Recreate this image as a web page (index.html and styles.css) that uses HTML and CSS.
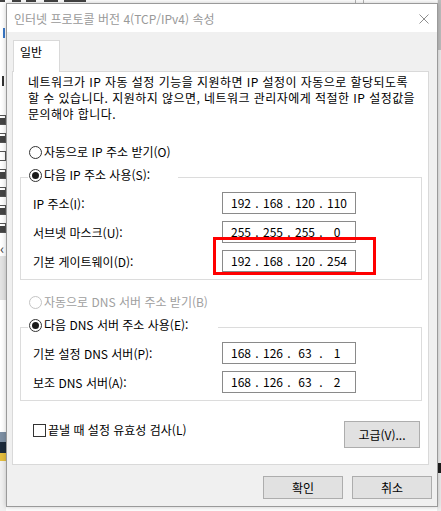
FILE: index.html
```html
<!DOCTYPE html>
<html lang="ko">
<head>
<meta charset="utf-8">
<title>인터넷 프로토콜 버전 4(TCP/IPv4) 속성</title>
<link rel="stylesheet" href="styles.css">
</head>
<body>
<div class="desktop">
  <div class="backwin">
    <span class="bw-tick k1"></span>
    <span class="bw-tick k2"></span>
    <span class="bw-tick k3"></span>
    <span class="bw-tick k4"></span>
    <span class="bw-tick k5"></span>
    <span class="bw-vline v1"></span>
    <span class="bw-vline v2"></span>
    <span class="bw-blue"></span>
    <span class="bw-mark"></span>
    <div class="bw-checks">
      <span class="bw-cb on"></span>
      <span class="bw-cb on"></span>
      <span class="bw-cb"></span>
      <span class="bw-cb on"></span>
      <span class="bw-cb on"></span>
      <span class="bw-cb on"></span>
      <span class="bw-cb on"></span>
    </div>
    <span class="bw-chev">&lsaquo;</span>
    <span class="bw-band"></span>
    <span class="bw-task t1"></span>
    <span class="bw-task t2"></span>
    <span class="bw-task t3"></span>
    <span class="bw-lower"></span>
    <span class="bw-right"></span>
    <span class="bw-thumb"></span>
    <span class="bw-rdark"></span>
  </div>

  <div class="dialog">
    <div class="titlebar">
      <span class="title">인터넷 프로토콜 버전 4(TCP/IPv4) 속성</span>
      <svg class="close" width="10" height="10" viewBox="0 0 10 10" aria-hidden="true">
        <path d="M0.5 0.5 L9.5 9.5 M9.5 0.5 L0.5 9.5" stroke="#8f8f8f" stroke-width="1" fill="none"/>
      </svg>
    </div>
    <div class="body">
      <div class="tabs"><div class="tab">일반</div></div>
      <div class="panel">
        <p class="desc">네트워크가 IP 자동 설정 기능을 지원하면 IP 설정이 자동으로 할당되도록<br>할 수 있습니다. 지원하지 않으면, 네트워크 관리자에게 적절한 IP 설정값을<br>문의해야 합니다.</p>

        <label class="radio first"><span class="rb"></span>자동으로 IP 주소 받기(O)</label>

        <fieldset class="group">
          <legend class="legend ip-legend"><span class="radio"><span class="rb on"></span>다음 IP 주소 사용(S):</span></legend>
          <div class="row"><span class="lbl">IP 주소(I):</span>
            <div class="ip"><span>192</span><i>.</i><span>168</span><i>.</i><span>120</span><i>.</i><span>110</span></div>
          </div>
          <div class="row"><span class="lbl">서브넷 마스크(U):</span>
            <div class="ip"><span>255</span><i>.</i><span>255</span><i>.</i><span>255</span><i>.</i><span>0</span></div>
          </div>
          <div class="row"><span class="lbl">기본 게이트웨이(D):</span>
            <div class="ip marked"><span>192</span><i>.</i><span>168</span><i>.</i><span>120</span><i>.</i><span>254</span><b class="redbox"></b></div>
          </div>
        </fieldset>

        <label class="radio disabled"><span class="rb"></span>자동으로 DNS 서버 주소 받기(B)</label>

        <fieldset class="group dns">
          <legend class="legend dns-legend"><span class="radio"><span class="rb on"></span>다음 DNS 서버 주소 사용(E):</span></legend>
          <div class="row"><span class="lbl">기본 설정 DNS 서버(P):</span>
            <div class="ip"><span>168</span><i>.</i><span>126</span><i>.</i><span>63</span><i>.</i><span>1</span></div>
          </div>
          <div class="row"><span class="lbl">보조 DNS 서버(A):</span>
            <div class="ip"><span>168</span><i>.</i><span>126</span><i>.</i><span>63</span><i>.</i><span>2</span></div>
          </div>
        </fieldset>

        <div class="bottomrow">
          <label class="check"><span class="cb"></span>끝낼 때 설정 유효성 검사(L)</label>
          <button class="btn adv">고급(V)...</button>
        </div>
      </div>
      <div class="actions">
        <button class="btn">확인</button>
        <button class="btn">취소</button>
      </div>
    </div>
  </div>
</div>
</body>
</html>
```

FILE: styles.css
```css
* { box-sizing: border-box; }

html, body {
  margin: 0;
  padding: 0;
}

body {
  width: 441px;
  height: 511px;
  overflow: hidden;
  background: #ffffff;
  font-family: "Noto Sans CJK KR", "Noto Sans", sans-serif;
  font-size: 12px;
  color: #000;
}

.desktop {
  position: relative;
  width: 441px;
  height: 511px;
  overflow: hidden;
}

/* ---------- background window fragments ---------- */
.backwin {
  position: absolute;
  inset: 0;
}
.bw-tick {
  position: absolute;
  top: 0;
  height: 2px;
  background: #444;
}
.bw-tick.k1 { left: 0; width: 5px; }
.bw-tick.k2 { left: 12px; width: 9px; }
.bw-tick.k3 { left: 26px; width: 10px; }
.bw-tick.k4 { left: 44px; width: 14px; }
.bw-tick.k5 { left: 64px; width: 22px; }
.bw-vline {
  position: absolute;
  top: 0;
  width: 1px;
  height: 4px;
  background: #b5b5b5;
}
.bw-vline.v1 { left: 355px; }
.bw-vline.v2 { left: 363px; }
.bw-blue {
  position: absolute;
  left: 3px;
  top: 28px;
  width: 2px;
  height: 10px;
  background: #3a78c8;
}
.bw-mark {
  position: absolute;
  left: 2px;
  top: 76px;
  width: 2px;
  height: 10px;
  background: #333;
}
.bw-checks {
  position: absolute;
  left: 0;
  top: 115px;
  display: flex;
  flex-direction: column;
  gap: 8px;
}
.bw-cb {
  display: block;
  width: 6px;
  height: 10px;
  border: 1px solid #555;
  border-left: none;
  background: #fff;
}
.bw-cb.on { background: linear-gradient(#fff 0 2px, #444 2px 8px, #fff 8px); }
.bw-chev {
  position: absolute;
  left: 0;
  top: 241px;
  font-size: 14px;
  line-height: 14px;
  color: #333;
}
.bw-band {
  position: absolute;
  left: 0;
  top: 256px;
  width: 6px;
  height: 44px;
  background: #e3e3e3;
}
.bw-task { position: absolute; left: 0; width: 6px; }
.bw-task.t1 { top: 432px; height: 10px; background: #7d8fa3; }
.bw-task.t2 { top: 442px; height: 11px; background: #1c2a3a; }
.bw-task.t3 { top: 453px; height: 8px; background: #e4bd3e; }
.bw-lower {
  position: absolute;
  left: 0;
  top: 461px;
  width: 6px;
  height: 50px;
  background: #f0f0f0;
}
.bw-right {
  position: absolute;
  left: 437px;
  top: 0;
  width: 4px;
  height: 511px;
  background: #ececec;
}
.bw-thumb {
  position: absolute;
  left: 438px;
  top: 0;
  width: 3px;
  height: 50px;
  background: #bdbdbd;
}
.bw-rdark {
  position: absolute;
  left: 438px;
  top: 463px;
  width: 3px;
  height: 10px;
  background: #1e1e1e;
}

/* ---------- dialog ---------- */
.dialog {
  position: absolute;
  left: 6px;
  top: 3px;
  width: 432px;
  height: 504px;
  border: 1px solid #9a9a9a;
  background: #f0f0f0;
  box-shadow: 0 0 5px rgba(0, 0, 0, 0.22);
  display: flex;
  flex-direction: column;
}

.titlebar {
  height: 28px;
  background: #ffffff;
  display: flex;
  align-items: center;
  justify-content: space-between;
  padding: 0 8px 0 7px;
}
.title {
  color: #999999;
  font-size: 12px;
  line-height: 16px;
  margin-top: 1px;
  white-space: nowrap;
}
.close { display: block; margin-top: 1px; }

.body {
  flex: 1;
  padding: 8px 5px 0 5px;
  display: flex;
  flex-direction: column;
}

.tabs {
  display: flex;
  padding-left: 1px;
  position: relative;
  z-index: 1;
}
.tab {
  width: 47px;
  height: 32px;
  background: #fff;
  border: 1px solid #d9d9d9;
  border-bottom: none;
  padding: 3px 0 0 6px;
  line-height: 15px;
  margin-bottom: -1px;
}

.panel {
  width: 417px;
  height: 394px;
  background: #ffffff;
  border: 1px solid #d9d9d9;
  padding: 2px 0 0 0;
}

.desc {
  margin: 0;
  padding-left: 15px;
  line-height: 16px;
  letter-spacing: 0.45px;
  white-space: nowrap;
}

.radio {
  display: flex;
  align-items: center;
  height: 16px;
  line-height: 16px;
  white-space: nowrap;
}
.radio.first { margin: 22px 0 0 16px; }
.radio.disabled { margin: 14px 0 0 16px; color: #a0a0a0; }

.rb {
  width: 13px;
  height: 13px;
  border: 1px solid #333333;
  border-radius: 50%;
  margin-right: 2px;
  display: flex;
  align-items: center;
  justify-content: center;
  background: #fff;
  flex: none;
}
.rb.on::after {
  content: "";
  width: 7px;
  height: 7px;
  border-radius: 50%;
  background: #1a1a1a;
}
.disabled .rb { border-color: #c4c4c4; }

.group {
  margin: 7px 0 0 7px;
  width: 402px;
  border: 1px solid #dcdcdc;
  padding: 5px 0 7px 12px;
  min-width: 0;
}
.group.dns { margin-top: 7px; }

.legend {
  margin-left: -5px;
  padding: 0 0 4px 1px;
  background: #fff;
}
.ip-legend { width: 150px; }
.dns-legend { width: 190px; }

.row {
  display: flex;
  align-items: center;
  height: 22px;
}
.row + .row { margin-top: 7px; }

.lbl {
  width: 189px;
  white-space: nowrap;
}

.ip {
  position: relative;
  display: flex;
  align-items: center;
  width: 134px;
  height: 22px;
  border: 1px solid #8a8a8a;
  padding: 0 4px;
  background: #fff;
  line-height: 16px;
}
.ip span {
  width: 28px;
  text-align: center;
}
.ip i {
  width: 4px;
  font-style: normal;
  text-align: center;
}

.redbox {
  position: absolute;
  left: -10px;
  top: -14px;
  width: 163px;
  height: 38px;
  border: 3px solid #ff0000;
}

.bottomrow {
  display: flex;
  justify-content: space-between;
  align-items: flex-start;
  margin-top: 20px;
  padding: 0 8px 0 20px;
}
.check {
  display: flex;
  align-items: center;
  height: 16px;
  line-height: 16px;
  margin-top: 1px;
  white-space: nowrap;
}
.cb {
  width: 13px;
  height: 13px;
  border: 1px solid #333;
  background: #fff;
  margin-right: 2px;
}

.btn {
  font-family: inherit;
  font-size: 12px;
  color: #000;
  background: #e1e1e1;
  border: 1px solid #adadad;
  border-radius: 0;
  padding: 0;
  width: 80px;
  height: 23px;
  line-height: 16px;
}
.btn.adv {
  width: 76px;
  height: 27px;
}

.actions {
  display: flex;
  justify-content: flex-end;
  gap: 9px;
  margin-top: 11px;
  padding-right: 0;
}
```
